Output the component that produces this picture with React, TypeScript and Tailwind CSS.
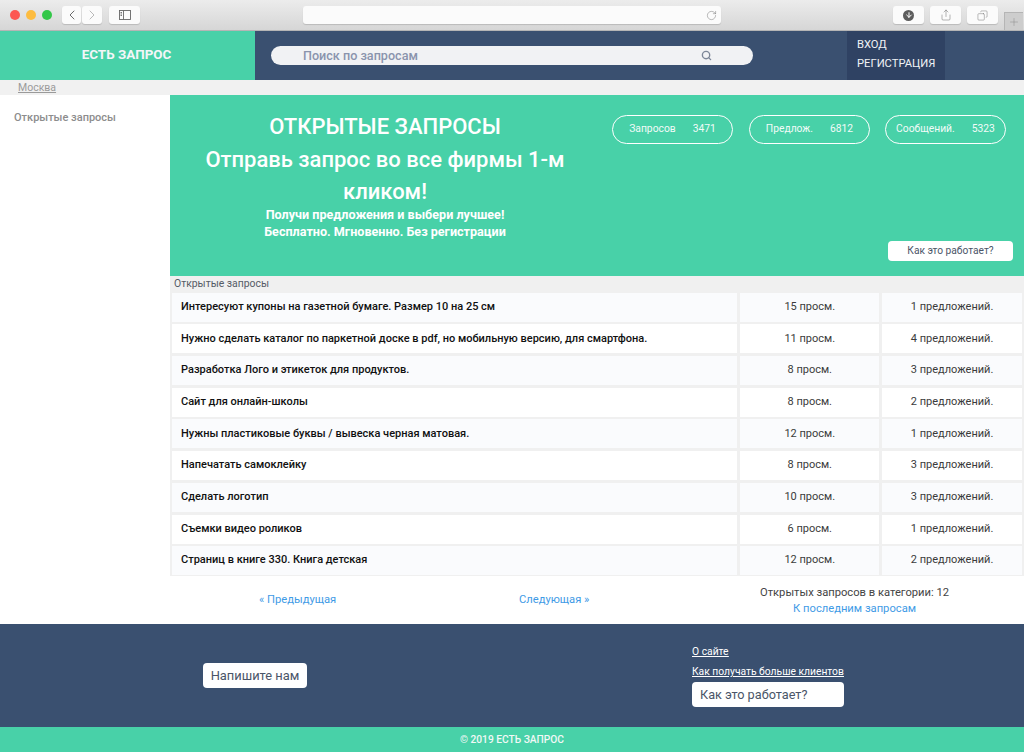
import { ChevronLeft, ChevronRight, RotateCw, Search, Share, Copy, Plus, ArrowDown } from "lucide-react";

const rows: [string, string, string][] = [
  ["Интересуют купоны на газетной бумаге. Размер 10 на 25 см", "15 просм.", "1 предложений."],
  ["Нужно сделать каталог по паркетной доске в pdf, но мобильную версию, для смартфона.", "11 просм.", "4 предложений."],
  ["Разработка Лого и этикеток для продуктов.", "8 просм.", "3 предложений."],
  ["Сайт для онлайн-школы", "8 просм.", "2 предложений."],
  ["Нужны пластиковые буквы / вывеска черная матовая.", "12 просм.", "1 предложений."],
  ["Напечатать самоклейку", "8 просм.", "3 предложений."],
  ["Сделать логотип", "10 просм.", "3 предложений."],
  ["Съемки видео роликов", "6 просм.", "1 предложений."],
  ["Страниц в книге 330. Книга детская", "12 просм.", "2 предложений."],
];

const pills: [string, string][] = [["Запросов", "3471"], ["Предлож.", "6812"], ["Сообщений.", "5323"]];

function ToolButton({ children, className }: { children: React.ReactNode; className: string }) {
  return (
    <div className={`flex h-[18px] items-center justify-center rounded-[3px] bg-[#fbfbfb] shadow-[0_1px_1px_rgba(0,0,0,0.15)] text-[#6b6b6b] ${className}`}>
      {children}
    </div>
  );
}

export default function App() {
  return (
    <div className="flex h-[752px] w-[1024px] flex-col overflow-hidden bg-white font-['Roboto',sans-serif]">
      {/* browser chrome */}
      <div className="flex h-[31px] shrink-0 items-center border-b border-[#b5b5b5] bg-gradient-to-b from-[#ececec] to-[#d6d6d6] pl-[10px]">
        <div className="flex gap-[6px]">
          <span className="h-[10px] w-[10px] rounded-full bg-[#fc5753]" />
          <span className="h-[10px] w-[10px] rounded-full bg-[#fdbc40]" />
          <span className="h-[10px] w-[10px] rounded-full bg-[#33c748]" />
        </div>
        <ToolButton className="ml-[10px] w-[19px]"><ChevronLeft size={16} strokeWidth={1.3} className="text-[#555]" /></ToolButton>
        <ToolButton className="ml-[1px] w-[20px]"><ChevronRight size={16} strokeWidth={1.2} className="text-[#a8a8a8]" /></ToolButton>
        <ToolButton className="ml-[7px] w-[31px]">
          <svg width="12" height="10" viewBox="0 0 12 10" fill="none" stroke="#666" strokeWidth="0.9">
            <rect x="0.5" y="0.5" width="11" height="9" />
            <path d="M4.5 0.5V9.5M1.5 2.5H3M1.5 4H3M1.5 5.5H3" />
          </svg>
        </ToolButton>
        <ToolButton className="ml-[163px] w-[418px] justify-end pr-[3px]"><RotateCw size={11} strokeWidth={1} className="mr-[1px]" /></ToolButton>
        <ToolButton className="ml-[172px] w-[31px]">
          <span className="flex h-[11px] w-[11px] items-center justify-center rounded-full bg-[#5c5c5c]">
            <ArrowDown size={8} strokeWidth={3} className="text-white" />
          </span>
        </ToolButton>
        <ToolButton className="ml-[6px] w-[31px]"><Share size={12} strokeWidth={1} /></ToolButton>
        <ToolButton className="ml-[6px] w-[31px]"><Copy size={11} strokeWidth={1} className="-scale-x-100" /></ToolButton>
        <div className="ml-[6px] flex h-[18px] w-[19px] items-center justify-center self-end border-l border-t border-[#b5b5b5] bg-[#cdcdcd] text-[#8a8a8a]">
          <Plus size={12} strokeWidth={1} />
        </div>
      </div>

      {/* site header */}
      <header className="flex h-[49px] shrink-0">
        <div className="flex w-[255px] items-center justify-center bg-[#48d1a8] pr-[2px] text-[13.4px] font-bold text-[#f4f6f8]">
          ЕСТЬ ЗАПРОС
        </div>
        <div className="flex flex-1 bg-[#3a5070]">
          <div className="ml-[16px] mt-[15px] flex h-[19px] w-[482px] items-center justify-between rounded-full bg-[#f1f2f4] pl-[32px] pr-[41px] text-[12.6px] font-medium leading-[17px] text-[#8a94ad]">
            <span className="pb-[1px]">Поиск по запросам</span>
            <Search size={11} strokeWidth={3} className="text-[#7d8798]" />
          </div>
          <div className="ml-[94px] flex w-[98px] flex-col justify-center gap-[3px] bg-[#2f4263] pb-[2px] pl-[10px] text-[11.2px] leading-[16px] text-[#f0f2f5]">
            <span>ВХОД</span>
            <span>РЕГИСТРАЦИЯ</span>
          </div>
        </div>
      </header>

      {/* city strip */}
      <div className="h-[15px] shrink-0 bg-[#f1f1f1] pl-[18px] text-[10.5px] leading-[15px] text-[#9a9a9a] underline">Москва</div>

      <div className="flex h-[529px] shrink-0">
        <aside className="w-[170px] shrink-0 pl-[14px] pt-[15px] text-[11px] font-medium leading-[16px] text-[#8d8d8d]">
          Открытые запросы
        </aside>
        <main className="flex min-w-0 flex-1 flex-col">
          {/* hero */}
          <section className="flex h-[181px] shrink-0 bg-[#48d1a8] text-white">
            <div className="flex w-[430px] shrink-0 flex-col items-center pt-[18px] text-center font-medium">
              <h1 className="text-[22px] leading-[28px]">ОТКРЫТЫЕ ЗАПРОСЫ</h1>
              <h2 className="mt-[3px] w-[400px] text-[22px] leading-[32px]">Отправь запрос во все фирмы 1-м кликом!</h2>
              <p className="mt-[-2px] text-[12.6px] font-bold leading-[17px]">Получи предложения и выбери лучшее!</p>
              <p className="text-[12.6px] font-bold leading-[17px]">Бесплатно. Мгновенно. Без регистрации</p>
            </div>
            <div className="flex flex-1 flex-col items-end pr-[11px] pt-[20px]">
              <div className="mr-[7px] flex">
                {pills.map(([label, value], i) => (
                  <div key={label} className={`flex h-[29px] w-[121px] items-center justify-center gap-[17px] rounded-full border border-white pb-[1px] text-[10.3px] text-[#f2fbf8] ${i === 0 ? "" : i === 1 ? "ml-[16px]" : "ml-[15px]"}`}>
                    <span>{label}</span>
                    <span>{value}</span>
                  </div>
                ))}
              </div>
              <button className="mt-[97px] h-[20px] w-[125px] rounded-[4px] bg-white text-[10.2px] text-[#4a5568]">Как это работает?</button>
            </div>
          </section>

          {/* list */}
          <div className="flex flex-col bg-[#f0f0f0] pb-[1px]">
            <div className="h-[16.7px] pl-[4px] pt-[1px] text-[10.4px] leading-[14px] text-[#555b66]">Открытые запросы</div>
            <div className="flex flex-col gap-[2.7px] px-[2px]">
              {rows.map(([title, views, offers], i) => {
                const bg = i % 2 === 0 ? "bg-[#fafbfd]" : "bg-white";
                return (
                  <div key={title} className="flex h-[29px] gap-[3px] text-[11px] text-[#3b3b3b]">
                    <div className={`flex w-[566px] items-center pl-[9px] font-medium text-[#111] ${bg}`}>{title}</div>
                    <div className={`flex w-[139px] items-center justify-center ${bg}`}>{views}</div>
                    <div className={`flex w-[140px] items-center justify-center ${bg}`}>{offers}</div>
                  </div>
                );
              })}
            </div>
          </div>

          {/* pagination */}
          <div className="flex flex-1 items-center text-[11.2px] text-[#3f9be6]">
            <a className="ml-[89px] w-[260px]">« Предыдущая</a>
            <a className="w-[241px]">Следующая »</a>
            <div className="flex flex-col items-center leading-[15px]">
              <span className="text-[#444]">Открытых запросов в категории: 12</span>
              <a className="mt-[1px]">К последним запросам</a>
            </div>
          </div>
        </main>
      </div>

      {/* footer */}
      <footer className="flex h-[103px] shrink-0 bg-[#3a5070] text-white">
        <div className="ml-[203px] mt-[39px] flex h-[25px] w-[104px] items-center justify-center rounded-[4px] bg-white text-[12.9px] text-[#4a5568]">Напишите нам</div>
        <div className="ml-[385px] flex w-[152px] flex-col items-start pt-[21px] text-[10.3px] underline">
          <a className="leading-[13px]">О сайте</a>
          <a className="mt-[7px] whitespace-nowrap leading-[13px]">Как получать больше клиентов</a>
          <div className="mt-[4px] flex h-[25px] w-[152px] items-center rounded-[4px] bg-white pl-[8px] text-[12.7px] text-[#4a5568] no-underline">Как это работает?</div>
        </div>
      </footer>
      <div className="flex flex-1 items-center justify-center bg-[#48d1a8] pt-[1px] text-[10.2px] font-medium text-[#f2f8f6]">© 2019 ЕСТЬ ЗАПРОС</div>
    </div>
  );
}
